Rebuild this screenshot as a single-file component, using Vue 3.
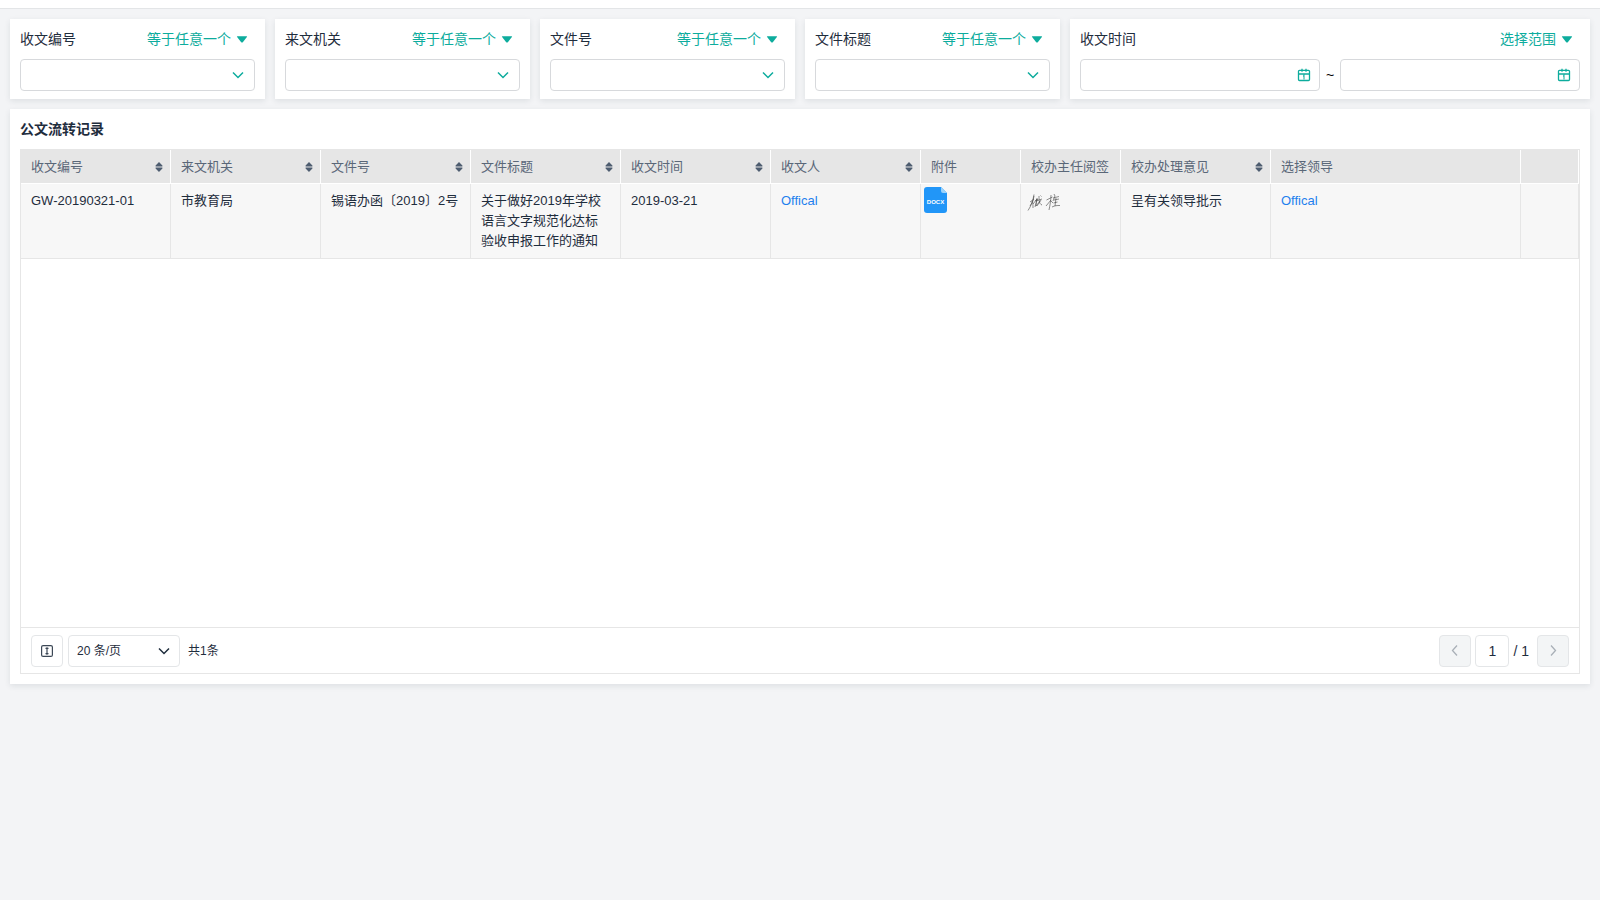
<script setup>
import { ref } from 'vue'

const filters = [
  { id: 'code', label: '收文编号' },
  { id: 'organ', label: '来文机关' },
  { id: 'number', label: '文件号' },
  { id: 'title', label: '文件标题' },
]

const columns = [
  { key: 'code', label: '收文编号', size: 'mid', sortable: true },
  { key: 'organ', label: '来文机关', size: 'mid', sortable: true },
  { key: 'number', label: '文件号', size: 'mid', sortable: true },
  { key: 'title', label: '文件标题', size: 'mid', sortable: true },
  { key: 'date', label: '收文时间', size: 'mid', sortable: true },
  { key: 'receiver', label: '收文人', size: 'mid', sortable: true, link: true },
  { key: 'file', label: '附件', size: 'small' },
  { key: 'sign', label: '校办主任阅签', size: 'small' },
  { key: 'opinion', label: '校办处理意见', size: 'mid', sortable: true },
  { key: 'leader', label: '选择领导', size: 'large', link: true },
  { key: 'rest', label: '', size: 'rest' },
]

const rows = [
  {
    code: 'GW-20190321-01',
    organ: '市教育局',
    number: '锡语办函〔2019〕2号',
    title: '关于做好2019年学校语言文字规范化达标验收申报工作的通知',
    date: '2019-03-21',
    receiver: 'Offical',
    opinion: '呈有关领导批示',
    leader: 'Offical',
  },
]

const page = ref('1')
const dates = ref(['', ''])
</script>

<template>
  <div class="page">
    <header class="topbar"></header>
    <main class="content">
      <form class="filters" @submit.prevent>
        <section v-for="f in filters" :key="f.id" class="card filter">
          <div class="filter-head">
            <label :for="f.id">{{ f.label }}</label>
            <div class="mode">
              <select :aria-label="f.label + '条件'">
                <option>等于任意一个</option>
              </select>
              <svg class="caret" viewBox="0 0 12 8" width="12" height="8"><path d="M1.500 1.300h9q1 0 .4.8L7 7q-1 1-2 0L1.100 2.100Q.5 1.300 1.500 1.300z" /></svg>
            </div>
          </div>
          <div class="box">
            <select :id="f.id" class="field"><option></option></select>
            <svg class="glyph" viewBox="0 0 14 14" width="14" height="14"><path d="M2 4.500l5 5 5-5" /></svg>
          </div>
        </section>

        <section class="card filter wide">
          <div class="filter-head">
            <label for="date0">收文时间</label>
            <div class="mode">
              <select aria-label="收文时间条件">
                <option>选择范围</option>
              </select>
              <svg class="caret" viewBox="0 0 12 8" width="12" height="8"><path d="M1.500 1.300h9q1 0 .4.8L7 7q-1 1-2 0L1.100 2.100Q.5 1.300 1.500 1.300z" /></svg>
            </div>
          </div>
          <div class="range">
            <template v-for="n in 2" :key="n">
              <span v-if="n === 2" class="tilde">~</span>
              <div class="box">
                <input :id="'date' + (n - 1)" v-model="dates[n - 1]" class="field" type="text" :aria-label="n === 1 ? '开始时间' : '结束时间'" />
                <svg class="glyph calendar" viewBox="0 0 14 14" width="14" height="14">
                  <rect x="1.500" y="2.300" width="11" height="10.200" rx="1" />
                  <path d="M1.500 6h11M5 .8v3M9 .8v3" />
                  <path class="thin" d="M6 8h1v3.500M7 6v2" />
                </svg>
              </div>
            </template>
          </div>
        </section>
      </form>

      <section class="card records">
        <h2>公文流转记录</h2>
        <div class="grid">
          <div class="scroll">
            <table>
              <colgroup><col v-for="c in columns" :key="c.key" :class="c.size" /></colgroup>
              <thead>
                <tr>
                  <th v-for="c in columns" :key="c.key" scope="col">
                    <div class="th">
                      <span>{{ c.label }}</span>
                      <button v-if="c.sortable" class="sort" type="button" :aria-label="c.label + '排序'">
                        <svg viewBox="0 0 8 10" width="8" height="10"><path d="M4 0L7.400 3.500Q7.900 4.500 7 4.500H1Q.1 4.500.6 3.500zM4 10L.6 6.500Q.1 5.500 1 5.500h6q.9 0 .4 1z" /></svg>
                      </button>
                    </div>
                  </th>
                </tr>
              </thead>
              <tbody>
                <tr v-for="r in rows" :key="r.code">
                  <td v-for="c in columns" :key="c.key" :class="c.key">
                    <a v-if="c.link" href="#">{{ r[c.key] }}</a>
                    <a v-else-if="c.key === 'file'" href="#" class="doc" aria-label="DOCX 附件">
                      <svg viewBox="0 0 23 26" width="23" height="26">
                        <path fill="#2196f8" d="M3 0h14l6 6v17q0 3-3 3H3q-3 0-3-3V3q0-3 3-3z" />
                        <path fill="#9bd3fc" d="M17 0l6 6h-4q-2 0-2-2z" />
                        <text x="11.500" y="16.500" text-anchor="middle">DOCX</text>
                      </svg>
                    </a>
                    <svg v-else-if="c.key === 'sign'" class="signature" viewBox="0 0 36 20" width="36" height="20" role="img" aria-label="签名">
                      <path d="M1 18.500C4 14 6 9 7 2.500M3 10l4-3M7 4l-1 5-3 5M5 9c1 2 1 4 1 7M6 12l4-5-2 8M8 9l3-2M10 6c0 3-1 6-1 8l4-5M9 9l6-2M12 4c0 4 0 8 3 9M14 8l-4 6M13.500 3.500l1 1" />
                      <path d="M19.500 8l6-3M24 3c0 5-1 10-2 15M19 14l5-6M24 9l2 2M27 2l1 2M26 6l6-1.500M28 4l-2 5M27 8l5-1M29 6l-1 8M26.500 11l4-1M25 15c3-1.500 5-1.500 8-1.500" />
                    </svg>
                    <template v-else>{{ r[c.key] }}</template>
                  </td>
                </tr>
              </tbody>
            </table>
          </div>
          <footer class="pager">
            <button class="square" type="button" aria-label="行高">
              <svg viewBox="0 0 12 12" width="12" height="12"><rect x=".6" y=".6" width="10.800" height="10.800" rx="1.500" /><path d="M6 3v6M4.500 3.500L6 2.800l1.500.7M4.500 8.500L6 9.200l1.500-.7" /></svg>
            </button>
            <div class="box size">
              <select class="field" aria-label="每页条数"><option>20 条/页</option></select>
              <svg class="glyph" viewBox="0 0 14 14" width="14" height="14"><path d="M2 4.500l5 5 5-5" /></svg>
            </div>
            <span class="total">共1条</span>
            <nav class="turn" aria-label="分页">
              <button class="square" type="button" disabled aria-label="上一页"><svg viewBox="0 0 12 12" width="12" height="12"><path d="M8 .5L3.500 5.500 8 10.500" /></svg></button>
              <input v-model="page" class="current" type="text" aria-label="页码" />
              <span class="pages">/ 1</span>
              <button class="square" type="button" disabled aria-label="下一页"><svg viewBox="0 0 12 12" width="12" height="12"><path d="M4 .5l4.500 5-4.500 5" /></svg></button>
            </nav>
          </footer>
        </div>
      </section>
    </main>
  </div>
</template>

<style>
html,
body {
  background: #f3f4f6;
}
</style>

<style scoped>
.page {
  min-height: 100vh;
  color: #1f2d3d;
  font: 14px/20px "Liberation Sans", "Noto Sans CJK SC", sans-serif;
}
.page * {
  box-sizing: border-box;
}
select,
input,
button {
  margin: 0;
  padding: 0;
  border: 0;
  background: none;
  color: inherit;
  font: inherit;
  appearance: none;
}
svg {
  display: block;
}
a {
  color: #1e80ee;
  text-decoration: none;
}
.topbar {
  height: 9px;
  background: #fff;
  border-bottom: 1px solid #e3e5e7;
}
.content {
  padding: 10px;
}
.filters {
  display: grid;
  grid-template-columns: repeat(6, minmax(0, 1fr));
  gap: 10px;
}
.card {
  padding: 10px;
  background: #fff;
  box-shadow: 0 2px 6px rgba(31, 45, 61, 0.1);
}
.filter {
  padding-bottom: 8px;
}
.wide {
  grid-column: span 2;
}
.filter-head {
  display: flex;
  justify-content: space-between;
  margin-bottom: 10px;
}
.mode {
  display: flex;
  align-items: center;
  gap: 5px;
  padding-right: 7px;
  color: #0dac9d;
}
.mode select {
  height: 20px;
}
.caret {
  fill: #0dac9d;
}
.range {
  display: flex;
  align-items: center;
}
.tilde {
  width: 20px;
  color: #000;
  text-align: center;
}
.box {
  display: grid;
  flex: 1;
  align-items: center;
}
.box > * {
  grid-area: 1 / 1;
}
.field {
  width: 100%;
  height: 32px;
  padding: 0 10px;
  border: 1px solid #d7d9dc;
  border-radius: 4px;
  background: #fff;
}
.glyph {
  justify-self: end;
  margin-right: 10px;
  pointer-events: none;
  fill: none;
  stroke: #0dac9d;
  stroke-width: 1.5;
}
.calendar {
  margin-right: 9px;
  stroke-width: 1.3;
}
.thin {
  stroke-width: 1;
}
.records {
  margin-top: 10px;
}
h2 {
  margin: 0 0 10px;
  font-size: 14px;
  line-height: 20px;
}
.grid {
  border: 1px solid #e6e6e6;
}
.scroll {
  min-height: 477px;
}
table {
  width: 100%;
  border-collapse: separate;
  border-spacing: 0;
  table-layout: fixed;
  font-size: 13px;
}
.mid {
  width: 150px;
}
.small {
  width: 100px;
}
.large {
  width: 250px;
}
th {
  height: 34px;
  padding: 0 10px;
  border-right: 1px solid #fff;
  border-bottom: 1px solid #fff;
  background: #e6e6e6;
  color: #5a6778;
  font-weight: 400;
  text-align: left;
  white-space: nowrap;
}
.th {
  display: flex;
  align-items: center;
  justify-content: space-between;
  margin-right: -3px;
}
.sort {
  fill: #4e5d70;
}
td {
  padding: 7px 10px;
  border-right: 1px solid #e6e6e6;
  border-bottom: 1px solid #e6e6e6;
  background: #f7f7f7;
  vertical-align: top;
}
.number {
  white-space: nowrap;
}
.file {
  padding: 3px;
}
.doc {
  display: inline-block;
}
.doc text {
  fill: #fff;
  font-size: 6px;
  font-weight: 700;
}
.sign {
  padding: 8px 6px;
}
.signature {
  fill: none;
  stroke: #444;
  stroke-width: 0.6;
}
.pager {
  display: flex;
  align-items: center;
  padding: 7px 10px 6px;
  border-top: 1px solid #e6e6e6;
  font-size: 12px;
}
.square {
  display: grid;
  place-items: center;
  width: 32px;
  height: 32px;
  border: 1px solid #e4e6e8;
  border-radius: 4px;
}
.square svg {
  fill: none;
  stroke: #3c4856;
  stroke-width: 1.2;
}
.square:disabled {
  background: #f3f5f6;
}
.square:disabled svg {
  stroke: #a9b0b7;
  stroke-width: 1.3;
}
.size {
  flex: 0 0 112px;
  margin: 0 8px 0 5px;
}
.size .field {
  padding: 0 8px;
  border-color: #e4e6e8;
}
.size .glyph {
  margin-right: 9px;
  stroke: #1f2d3d;
}
.turn {
  display: flex;
  align-items: center;
  gap: 4px;
  margin-left: auto;
  font-size: 14px;
}
.current {
  width: 34px;
  height: 32px;
  border: 1px solid #e4e6e8;
  border-radius: 4px;
  background: #fff;
  text-align: center;
}
.pages {
  margin-right: 4px;
}
</style>
